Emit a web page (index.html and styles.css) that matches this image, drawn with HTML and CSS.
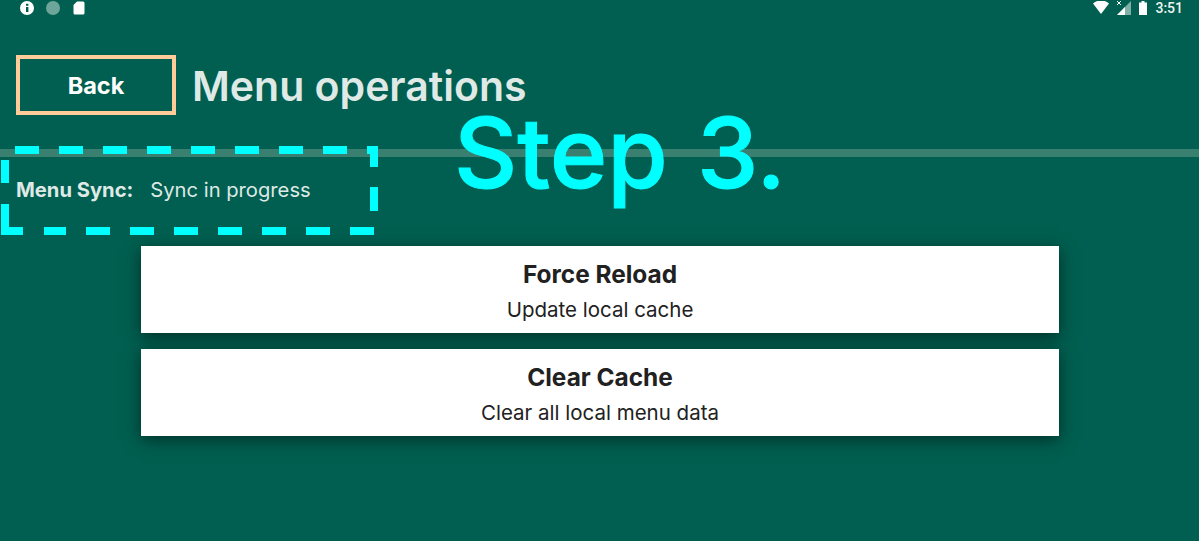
FILE: index.html
```html
<!DOCTYPE html>
<html lang="en">
<head>
    <meta charset="UTF-8">
    <title>Menu operations</title>
    <link rel="stylesheet" href="styles.css">
</head>
<body>
    <div class="status_bar">
        <div class="status_left">
            <svg width="16" height="16" viewBox="0 0 16 16"><circle cx="8" cy="8" r="7" fill="#fff"/><rect x="7" y="7" width="2.4" height="5" fill="#005f50"/><rect x="7" y="3.800" width="2.4" height="2" fill="#005f50"/></svg>
            <svg width="16" height="16" viewBox="0 0 16 16"><circle cx="8" cy="8" r="7" fill="#6ea59b"/><path d="M12 3a7 7 0 0 1-7 11.400A7 7 0 0 0 12 3z" fill="#c4d8d4"/></svg>
            <svg width="16" height="16" viewBox="0 0 16 16"><path d="M6 1.500h6a1.500 1.500 0 0 1 1.500 1.500v10a1.500 1.500 0 0 1-1.500 1.500H4a1.500 1.500 0 0 1-1.500-1.500V5z" fill="#fff"/></svg>
        </div>
        <div class="status_right">
            <svg width="16" height="13" viewBox="0 0 16 13"><path d="M0 2.500a12 12 0 0 1 16 0L8 13z" fill="#fff"/></svg>
            <svg class="signal" width="15" height="14" viewBox="0 0 15 14"><path d="M15 0v14H1z" fill="#7fb0a8"/><path d="M9 6v8H1z" fill="#fff"/><path d="M1 0l4 4M5 0L1 4" stroke="#fff" stroke-width="1"/></svg>
            <svg class="battery" width="8" height="14" viewBox="0 0 8 14"><path d="M2.500 0h3v1.500H8V14H0V1.500h2.500z" fill="#fff"/></svg>
            <span class="clock">3:51</span>
        </div>
    </div>

    <div class="header">
        <a class="back_btn">Back</a>
        <h1 class="page_title">Menu operations</h1>
    </div>
    <div class="divider"></div>

    <div class="sync_row">
        <b>Menu Sync:</b>
        <span>Sync in progress</span>
    </div>

    <div class="card_list">
        <div class="card">
            <div class="card_title">Force Reload</div>
            <div class="card_sub">Update local cache</div>
        </div>
        <div class="card">
            <div class="card_title">Clear Cache</div>
            <div class="card_sub">Clear all local menu data</div>
        </div>
    </div>

    <!-- tutorial annotation drawn over the screen -->
    <div class="step_label">Step 3.</div>
    <svg class="step_box" width="1199" height="541" viewBox="0 0 1199 541">
        <path d="M15 150H374V231H44" stroke-dasharray="24 20"/>
        <path d="M23 231H5V204M5 183V160"/>
    </svg>
</body>
</html>
```

FILE: styles.css
```css
*{
    margin: 0;
    padding: 0;
    box-sizing: border-box;
}
html, body{
    width: 1199px;
    height: 541px;
    overflow: hidden;
}
body{
    background: #005f50;
    font-family: "Inter", "Open Sans", sans-serif;
    color: #dfe9e6;
}
.status_bar{
    height: 15px;
    display: flex;
    justify-content: space-between;
    align-items: center;
    padding: 0 16px 0 19px;
}
.status_left{
    display: flex;
    gap: 10px;
}
.status_right{
    display: flex;
    align-items: center;
}
.signal{
    margin-left: 7px;
}
.battery{
    margin-left: 8px;
}
.clock{
    margin-left: 8px;
    font-family: "Roboto", sans-serif;
    font-size: 14px;
    font-weight: 500;
    color: #eef4f2;
}
.header{
    display: flex;
    align-items: center;
    gap: 16px;
    padding: 40px 16px 0;
}
.back_btn{
    width: 160px;
    height: 60px;
    display: flex;
    align-items: center;
    justify-content: center;
    border: 4px solid #ffcc99;
    color: #fff;
    font-size: 23.5px;
    font-weight: 700;
}
.page_title{
    margin-top: 2px;
    font-size: 41px;
    font-weight: 600;
}
.divider{
    height: 8px;
    margin-top: 34px;
    background: #3a8070;
}
.sync_row{
    display: flex;
    gap: 17px;
    padding: 21px 16px 0;
    font-size: 20.200px;
    line-height: 24px;
}
.sync_row b{
    font-weight: 700;
}
.card_list{
    display: flex;
    flex-direction: column;
    gap: 16px;
    width: 918px;
    margin: 44px 0 0 141px;
}
.card{
    height: 87px;
    padding-top: 13px;
    background: #fff;
    color: #212121;
    text-align: center;
    box-shadow: 0 4px 16px rgba(0,0,0,.5);
}
.card_title{
    font-size: 24.400px;
    font-weight: 700;
    line-height: 30px;
}
.card_sub{
    margin-top: 8px;
    font-size: 20.500px;
    line-height: 26px;
}
.step_label{
    position: absolute;
    left: 454px;
    top: 93px;
    color: #00ffff;
    font-size: 98px;
    font-weight: 500;
    line-height: 120px;
    word-spacing: 3px;
    -webkit-text-stroke: 1px #00ffff;
}
.step_box{
    position: absolute;
    left: 0;
    top: 0;
    fill: none;
    stroke: #00ffff;
    stroke-width: 8;
}
```
